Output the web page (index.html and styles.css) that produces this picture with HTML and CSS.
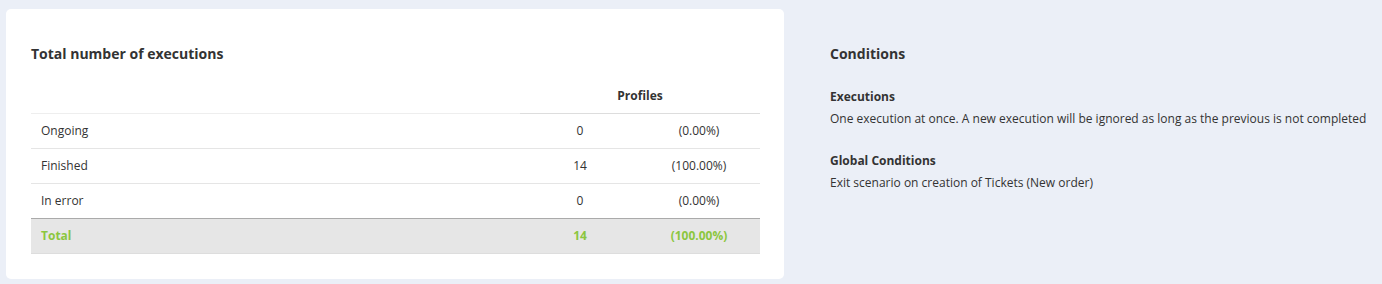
FILE: index.html
```html
<!DOCTYPE html>
<html>
<head>
<meta charset="utf-8">
<link rel="stylesheet" href="styles.css">
</head>
<body>
<div class="page">
  <section class="card">
    <h2 class="title">Total number of executions</h2>
    <table class="stats">
      <thead>
        <tr>
          <th class="th-empty"></th>
          <th class="th-profiles" colspan="2">Profiles</th>
        </tr>
      </thead>
      <tbody>
        <tr><td class="label">Ongoing</td><td class="num">0</td><td class="pct">(0.00%)</td></tr>
        <tr><td class="label">Finished</td><td class="num">14</td><td class="pct">(100.00%)</td></tr>
        <tr class="last"><td class="label">In error</td><td class="num">0</td><td class="pct">(0.00%)</td></tr>
      </tbody>
      <tfoot>
        <tr class="total"><td class="label">Total</td><td class="num">14</td><td class="pct">(100.00%)</td></tr>
      </tfoot>
    </table>
  </section>
  <aside class="conditions">
    <h2 class="title">Conditions</h2>
    <div class="cond">
      <h3 class="cond-head">Executions</h3>
      <p class="cond-text">One execution at once. A new execution will be ignored as long as the previous is not completed</p>
    </div>
    <div class="cond">
      <h3 class="cond-head">Global Conditions</h3>
      <p class="cond-text">Exit scenario on creation of Tickets (New order)</p>
    </div>
  </aside>
</div>
</body>
</html>
```
FILE: styles.css
```css
* { box-sizing: border-box; }
html, body {
  margin: 0;
  padding: 0;
  background: #ebeff7;
  font-family: "Open Sans", "Liberation Sans", sans-serif;
  color: #333;
}
.page {
  display: flex;
  align-items: flex-start;
  padding: 9px 6px;
}
.card {
  width: 778px;
  flex: none;
  background: #fff;
  border-radius: 5px;
  padding: 35px 25px 25px;
}
.title {
  margin: 0;
  font-size: 14px;
  line-height: 20px;
  font-weight: 700;
  color: #333;
}
.stats {
  width: 729px;
  margin-top: 14px;
  border-collapse: collapse;
  font-size: 12px;
}
.stats th {
  height: 35px;
  padding: 0;
  font-weight: 700;
  text-align: center;
  vertical-align: middle;
}
.th-empty { border-bottom: 1px solid #eeeeee; }
.th-profiles { width: 240px; border-bottom: 1px solid #dddddd; }
.stats td {
  height: 35px;
  padding: 0 10px;
  border-bottom: 1px solid #e5e5e5;
  vertical-align: middle;
}
.stats td.label { text-align: left; }
.stats td.num { width: 120px; text-align: center; padding: 0; }
.stats td.pct { width: 120px; text-align: center; padding: 0 2px 0 0; }
.stats tr.last td { border-bottom: 1px solid #aaaaaa; }
.stats tr.total td {
  background: #e6e6e6;
  color: #8cc63f;
  font-weight: 700;
  border-bottom: 1px solid #dddddd;
}
.conditions {
  padding: 35px 0 0 46px;
}
.cond { margin-top: 24px; }
.cond + .cond { margin-top: 24px; }
.cond-head {
  margin: 0;
  font-size: 12px;
  line-height: 18px;
  font-weight: 700;
}
.cond-text {
  margin: 4px 0 0;
  font-size: 12px;
  line-height: 18px;
}
```
